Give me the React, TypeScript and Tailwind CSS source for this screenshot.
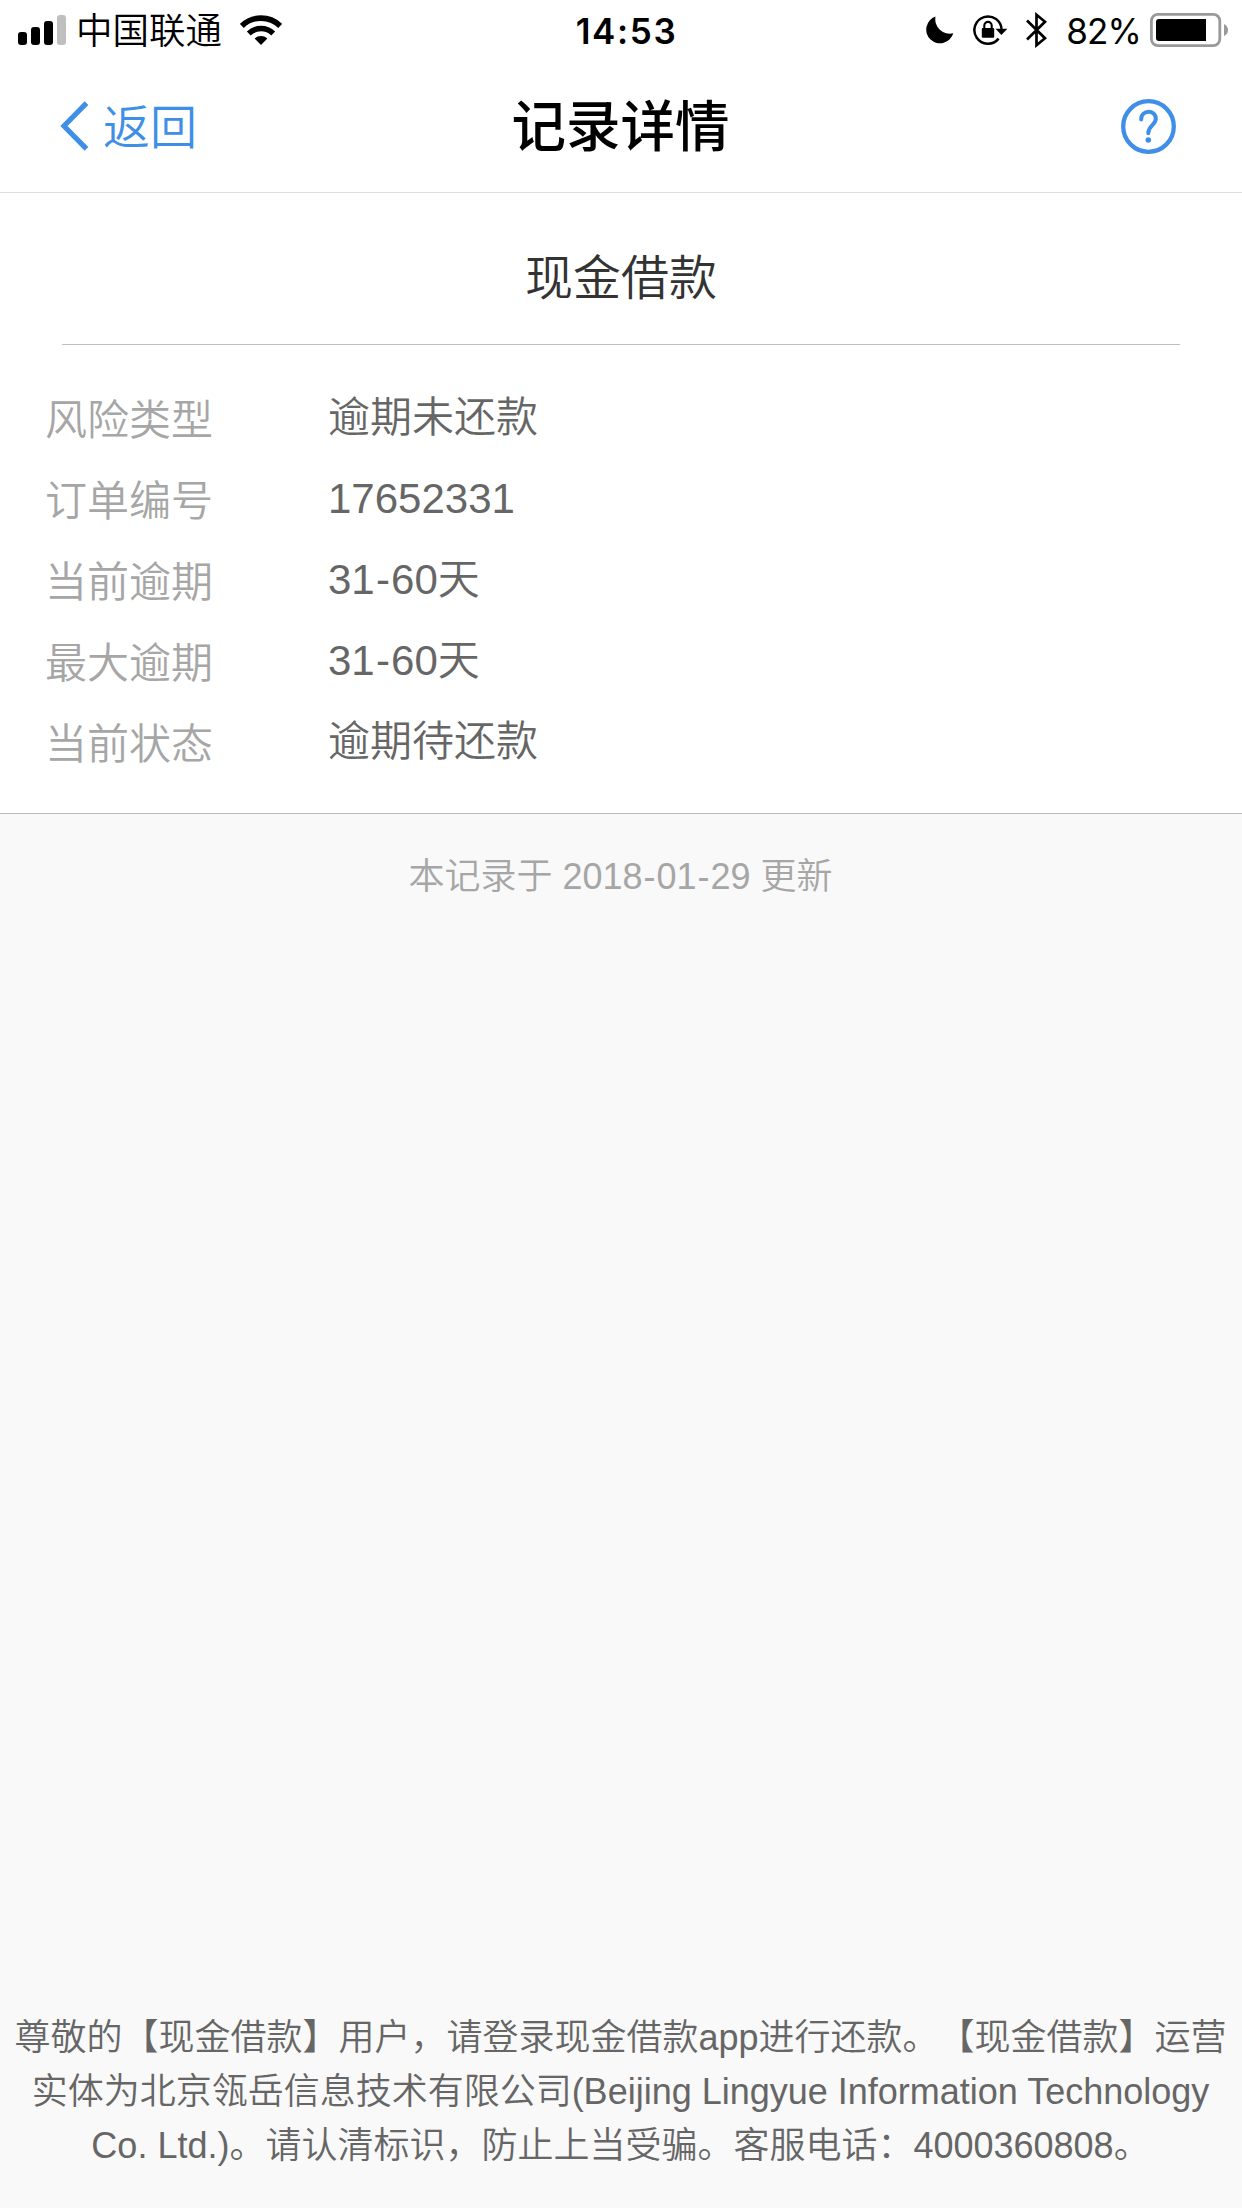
import React from "react";

const records = [
  { label: "风险类型", value: "逾期未还款" },
  { label: "订单编号", value: "17652331" },
  { label: "当前逾期", value: "31-60天" },
  { label: "最大逾期", value: "31-60天" },
  { label: "当前状态", value: "逾期待还款" },
];

const notice = [
  "尊敬的【现金借款】用户，请登录现金借款app进行还款。【现金借款】运营",
  "实体为北京瓴岳信息技术有限公司(Beijing Lingyue Information Technology",
  "Co. Ltd.)。请认清标识，防止上当受骗。客服电话：4000360808。",
];

/** Text whose hyphens get a little extra room on both sides. */
function Hyphenated({ text }: { text: string }) {
  return (
    <>
      {text.split("-").map((part, i) => (
        <React.Fragment key={i}>
          {i > 0 && <span className="px-[0.028em]">-</span>}
          {part}
        </React.Fragment>
      ))}
    </>
  );
}

function SignalIcon() {
  return (
    <svg className="h-[30px] w-12 shrink-0" viewBox="0 0 48 30">
      <rect x="0" y="17" width="9" height="13" rx="3" />
      <rect x="13" y="12" width="9" height="18" rx="3" />
      <rect x="26" y="6" width="9" height="24" rx="3" />
      <rect x="39" y="0" width="9" height="30" rx="3" fill="#bfbfbf" />
    </svg>
  );
}

function WifiIcon() {
  return (
    <svg className="h-[30px] w-[42px] shrink-0" viewBox="0 0 42 30">
      <g fill="none" stroke="#000" strokeWidth="5.6">
        <path d="M1.8 10.9 A27.5 27.5 0 0 1 40.2 10.9" />
        <path d="M8.8 18.5 A17.5 17.5 0 0 1 33.2 18.5" />
      </g>
      <path d="M14.6 23.6 A9.5 9.5 0 0 1 27.4 23.6 L21 30 Z" />
    </svg>
  );
}

function MoonIcon() {
  return (
    <svg className="h-7 w-7 shrink-0" viewBox="0 0 28 28">
      <path d="M9.5 0.5 A13.8 13.8 0 1 0 27.3 17.3 A14.6 14.6 0 0 1 9.5 0.5 Z" />
    </svg>
  );
}

function RotationLockIcon() {
  return (
    <svg className="h-8 w-[35px] shrink-0" viewBox="0 0 35 32">
      <path d="M28.6 16 A13.6 13.6 0 1 0 25.6 24.6" fill="none" stroke="#000" strokeWidth="2.5" />
      <path d="M22.5 14.8 H34.4 L28.4 21 Z" />
      <rect x="8.8" y="14" width="12.4" height="9.8" rx="1" />
      <path d="M11.3 15 V11.6 A3.7 3.7 0 0 1 18.7 11.6 V15" fill="none" stroke="#000" strokeWidth="2.1" />
    </svg>
  );
}

function BluetoothIcon() {
  return (
    <svg className="h-9 w-[21px] shrink-0" viewBox="0 0 21 36" fill="none" stroke="#000" strokeWidth="2.7">
      <path d="M1 8.5 L19 26.2 L10.5 33.2 V2.8 L19 9.8 L1 27.5" />
    </svg>
  );
}

function BatteryIcon() {
  return (
    <svg className="h-[34px] w-[79px] shrink-0" viewBox="0 0 79 34">
      <rect x="1.4" y="1.4" width="68.4" height="31.2" rx="6.5" fill="none" stroke="#999" strokeWidth="2.8" />
      <path d="M6 9 Q6 6 9 6 H56 V28 H9 Q6 28 6 25 Z" />
      <path d="M74 11 Q78 13 78 17 Q78 21 74 23 Z" fill="#999" />
    </svg>
  );
}

function StatusBar() {
  return (
    <div className="grid h-[60px] grid-cols-[1fr_auto_1fr] items-center px-[18px] text-black">
      <div className="flex items-center">
        <SignalIcon />
        <span className="ml-2.5 h-[60px] pt-0.5 text-[36.5px] font-[350] leading-[60px]">中国联通</span>
        <span className="ml-[18px]">
          <WifiIcon />
        </span>
      </div>
      <div className="pl-[11px] pt-0.5 font-[Inter] text-[35px] font-semibold leading-[58px] tracking-[1.6px]">
        14:53
      </div>
      <div className="-mr-[5px] flex items-center justify-end">
        <MoonIcon />
        <span className="ml-[19px]">
          <RotationLockIcon />
        </span>
        <span className="ml-[18px]">
          <BluetoothIcon />
        </span>
        <span className="ml-[19px] pt-0.5 font-[Inter] text-[35px] leading-[58px] tracking-[-0.9px]">82%</span>
        <span className="ml-[9px]">
          <BatteryIcon />
        </span>
      </div>
    </div>
  );
}

function NavBar() {
  return (
    <header className="grid h-[133px] grid-cols-[1fr_auto_1fr] items-center border-b border-[#dedede] pl-[60px] pr-[66px]">
      <button className="flex items-center text-[#3f8fe8]">
        <svg className="h-[50px] w-[29px]" viewBox="0 0 29 50" fill="none" stroke="currentColor" strokeWidth="5.2">
          <path d="M26.5 2.2 L4 25 L26.5 47.8" />
        </svg>
        <span className="ml-3.5 pt-1 text-[47px] font-[350] leading-[70px]">返回</span>
      </button>
      <h1 className="pl-[5px] pt-[3px] text-[54.5px] font-medium leading-[80px] text-black">记录详情</h1>
      <button className="flex justify-end text-[#3f8fe8]">
        <svg className="h-[55px] w-[55px]" viewBox="0 0 55 55" fill="none" stroke="currentColor">
          <circle cx="27.5" cy="27.5" r="25.3" strokeWidth="4.3" />
          <path
            d="M20.2 20.4 C20.2 10.4 34.8 10.4 34.8 19.8 C34.8 26 27.3 26.6 27.3 34.2"
            strokeWidth="4"
            strokeLinecap="round"
          />
          <circle cx="27.3" cy="41" r="2.8" fill="currentColor" stroke="none" />
        </svg>
      </button>
    </header>
  );
}

export default function App() {
  return (
    <div className="flex h-[2208px] w-[1242px] flex-col overflow-hidden bg-[#f9f9f9] font-['Liberation_Sans','Noto_Sans_CJK_SC',sans-serif] [text-spacing-trim:space-all]">
      <div className="bg-white">
        <StatusBar />
        <NavBar />
      </div>
      <main className="flex flex-1 flex-col font-[350]">
        <section className="border-b border-[#bbbbbb] bg-white pb-[31px]">
          <h2 className="mx-[62px] h-[152px] border-b border-[#bfbfbf] pt-[50px] text-center text-[48px] font-[350] leading-[72px] text-[#333333]">
            现金借款
          </h2>
          <dl className="pl-[45px] pt-8 text-[42px] leading-[81px]">
            {records.map((r) => (
              <div key={r.label} className="flex h-[81px]">
                <dt className="w-[283px] pt-[3px] text-[#a6a6a6]">{r.label}</dt>
                <dd className="text-[#666666]">
                  <Hyphenated text={r.value} />
                </dd>
              </div>
            ))}
          </dl>
        </section>
        <p className="mt-9 pr-px text-center text-[36px] leading-[54px] text-[#a6a6a6]">
          <Hyphenated text="本记录于 2018-01-29 更新" />
        </p>
        <footer className="mt-auto pb-[35px] pr-px text-center text-[36px] leading-[54px] text-[#666666]">
          {notice.map((line) => (
            <p key={line} className="whitespace-nowrap">
              {line}
            </p>
          ))}
        </footer>
      </main>
    </div>
  );
}
